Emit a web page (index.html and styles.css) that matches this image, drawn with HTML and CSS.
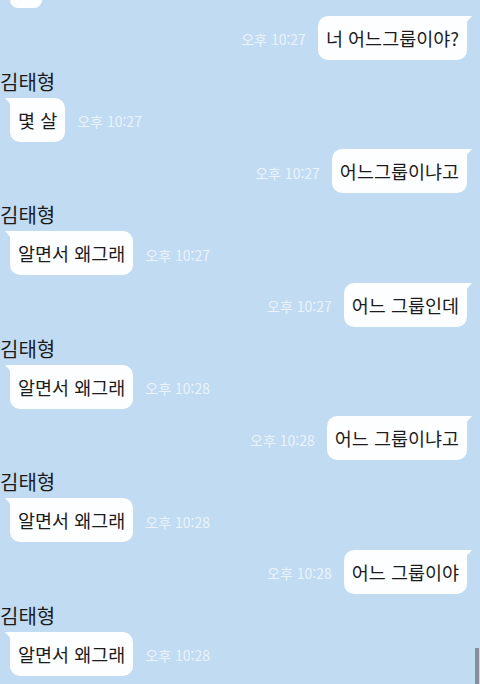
FILE: index.html
```html
<!DOCTYPE html>
<html lang="ko">
<head>
    <meta charset="UTF-8">
    <meta name="viewport" content="width=device-width, initial-scale=1.0">
    <title>채팅</title>
    <link rel="stylesheet" href="styles.css">
</head>
<body>
    <div class="chat">
        <div class="stub"></div>

        <div class="group">
            <div class="row mine">
                <span class="time">오후 10:27</span>
                <div class="bubble">너 어느그룹이야?</div>
            </div>
            <div class="name">김태형</div>
            <div class="row theirs">
                <div class="bubble">몇 살</div>
                <span class="time">오후 10:27</span>
            </div>
        </div>

        <div class="group">
            <div class="row mine">
                <span class="time">오후 10:27</span>
                <div class="bubble">어느그룹이냐고</div>
            </div>
            <div class="name">김태형</div>
            <div class="row theirs">
                <div class="bubble">알면서 왜그래</div>
                <span class="time">오후 10:27</span>
            </div>
        </div>

        <div class="group">
            <div class="row mine">
                <span class="time">오후 10:27</span>
                <div class="bubble">어느 그룹인데</div>
            </div>
            <div class="name">김태형</div>
            <div class="row theirs">
                <div class="bubble">알면서 왜그래</div>
                <span class="time">오후 10:28</span>
            </div>
        </div>

        <div class="group">
            <div class="row mine">
                <span class="time">오후 10:28</span>
                <div class="bubble">어느 그룹이냐고</div>
            </div>
            <div class="name">김태형</div>
            <div class="row theirs">
                <div class="bubble">알면서 왜그래</div>
                <span class="time">오후 10:28</span>
            </div>
        </div>

        <div class="group">
            <div class="row mine">
                <span class="time">오후 10:28</span>
                <div class="bubble">어느 그룹이야</div>
            </div>
            <div class="name">김태형</div>
            <div class="row theirs">
                <div class="bubble">알면서 왜그래</div>
                <span class="time">오후 10:28</span>
            </div>
        </div>
    </div>
    <div class="scrollbar"></div>
</body>
</html>
```

FILE: styles.css
```css
body {
    margin: 0;
    height: 684px;
    overflow: hidden;
    background-color: #c1dbf3;
    font-family: "Noto Sans CJK KR", "Noto Sans", sans-serif;
    color: #1c1c1c;
    position: relative;
}
.chat {
    display: flex;
    flex-direction: column;
    gap: 7.5px;
}
.stub {
    width: 32px;
    height: 8px;
    margin-left: 10px;
    background-color: #fdfeff;
    border-radius: 0 0 10px 10px;
}
.group {
    display: flex;
    flex-direction: column;
}
.row {
    display: flex;
    align-items: center;
    gap: 12px;
}
.row.mine {
    justify-content: flex-end;
    padding-right: 13px;
}
.row.theirs {
    padding-left: 10px;
}
.bubble {
    position: relative;
    height: 44px;
    line-height: 44px;
    padding: 0 8px;
    font-size: 18.5px;
    background-color: #fdfeff;
    border-radius: 10px;
    white-space: nowrap;
}
.row.mine .bubble {
    border-top-right-radius: 3px;
}
.row.theirs .bubble {
    border-top-left-radius: 3px;
}
.row.mine .bubble::after {
    content: '';
    position: absolute;
    top: 0;
    right: -5px;
    border-left: 8px solid #fdfeff;
    border-bottom: 9px solid transparent;
}
.row.theirs .bubble::before {
    content: '';
    position: absolute;
    top: 0;
    left: -5px;
    border-right: 8px solid #fdfeff;
    border-bottom: 9px solid transparent;
}
.time {
    font-size: 14px;
    line-height: 16px;
    padding-top: 3px;
    color: rgba(255, 255, 255, 0.7);
    white-space: nowrap;
}
.name {
    font-size: 20px;
    line-height: 24px;
    height: 24px;
    margin-top: 10px;
    margin-bottom: 4px;
}
.scrollbar {
    position: absolute;
    right: 1px;
    top: 648px;
    width: 4px;
    height: 36px;
    background-color: #858e99;
}
```
